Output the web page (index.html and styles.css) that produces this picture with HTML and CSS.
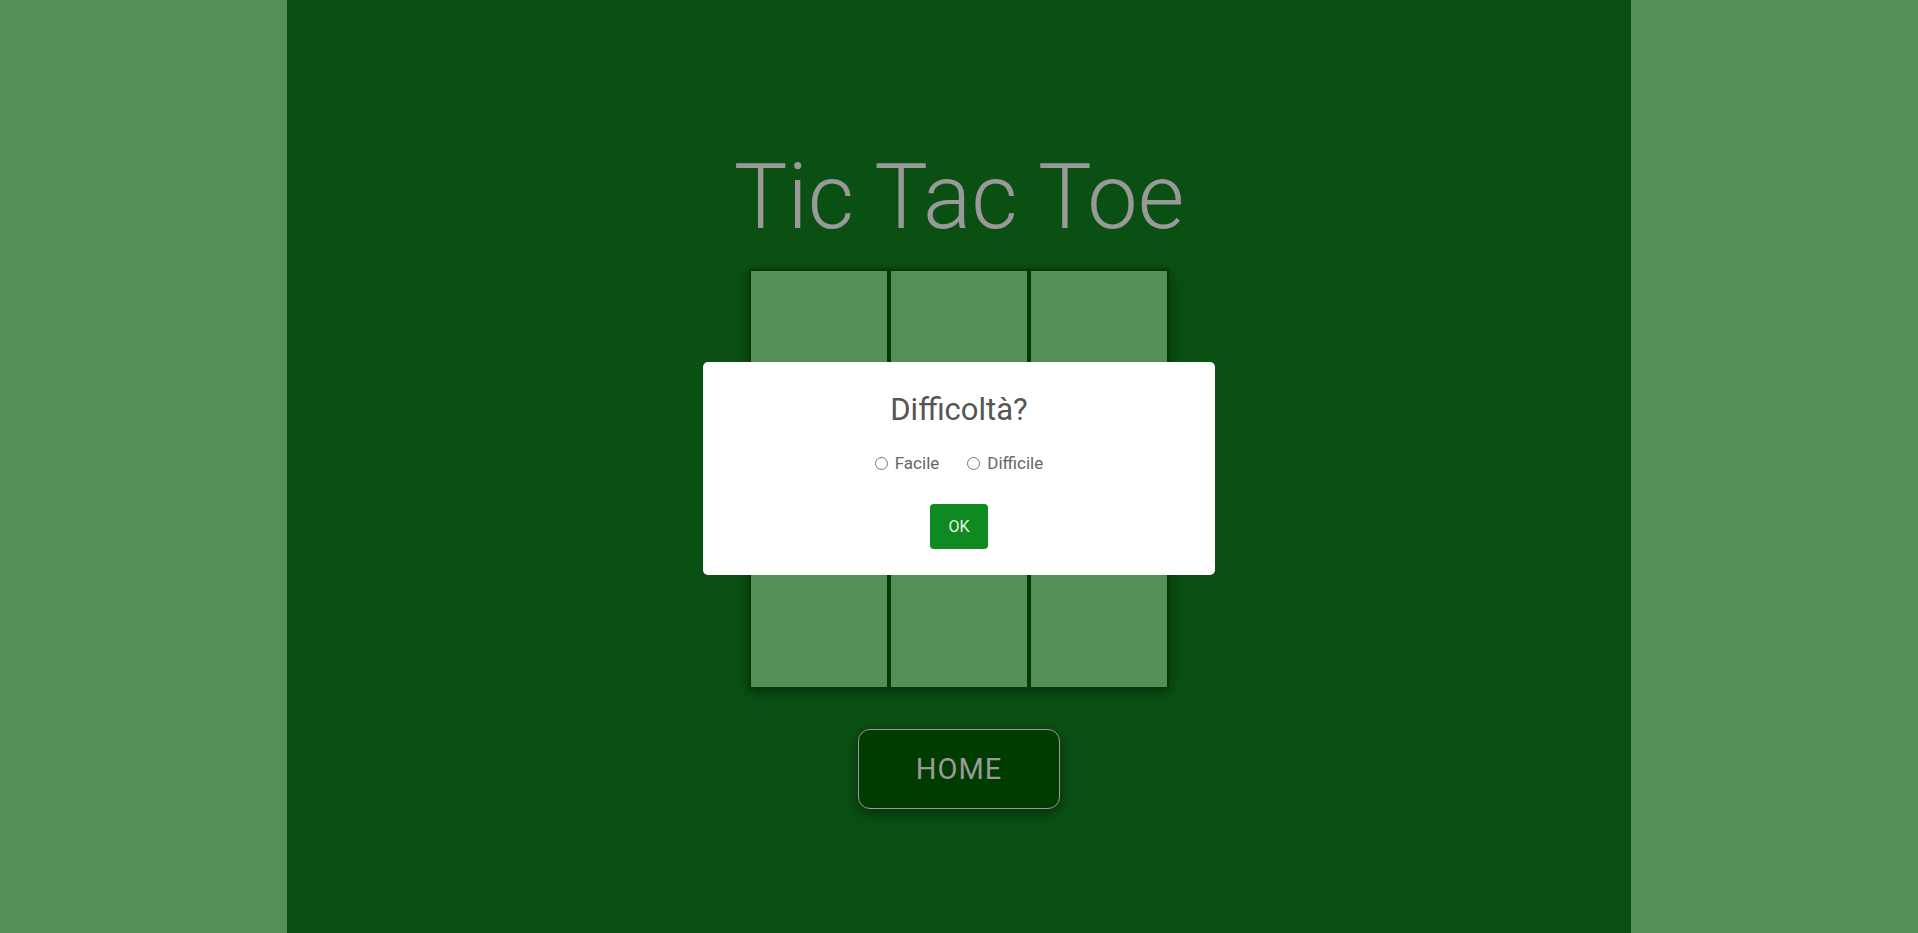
FILE: index.html
```html
<!DOCTYPE html>
<html lang="it">
<head>
<meta charset="utf-8">
<title>Tic Tac Toe</title>
<link rel="stylesheet" href="styles.css">
</head>
<body>
<main class="page">
  <h1 class="title">Tic Tac Toe</h1>
  <div class="board">
    <div class="cell"></div><div class="cell"></div><div class="cell"></div>
    <div class="cell"></div><div class="cell"></div><div class="cell"></div>
    <div class="cell"></div><div class="cell"></div><div class="cell"></div>
  </div>
  <button class="home">HOME</button>
</main>
<div class="modal">
  <h2 class="modal-title">Difficoltà?</h2>
  <div class="options">
    <label class="opt"><span class="radio"></span>Facile</label>
    <label class="opt"><span class="radio"></span>Difficile</label>
  </div>
  <button class="ok">OK</button>
</div>
</body>
</html>
```
FILE: styles.css
```css
html, body {
  margin: 0;
  padding: 0;
  height: 100%;
}
body {
  background: #568f56;
  font-family: Roboto, "Noto Sans", sans-serif;
  overflow: hidden;
}
.page {
  width: 1344px;
  margin: 0 auto;
  height: 100%;
  background: #0a5013;
  display: flex;
  flex-direction: column;
  align-items: center;
  padding-top: 145px;
  box-sizing: border-box;
}
.title {
  margin: 0;
  font-weight: 300;
  font-size: 90px;
  line-height: 106px;
  color: #999999;
  letter-spacing: 0;
}
.board {
  margin-top: 18px;
  display: grid;
  grid-template-columns: repeat(3, 140px);
  grid-template-rows: repeat(3, 140px);
  box-shadow: 0 3px 12px rgba(0, 0, 0, 0.45);
}
.cell {
  background: #568f56;
  border: 2px solid #023a02;
}
.home {
  margin-top: 40px;
  width: 202px;
  height: 80px;
  background: #003c00;
  border: 1px solid #9a9a9a;
  border-radius: 12px;
  color: #9a9a9a;
  font-family: Roboto, "Noto Sans", sans-serif;
  font-size: 29px;
  letter-spacing: 1px;
  box-shadow: 0 4px 14px rgba(0, 0, 0, 0.45);
}
.modal {
  position: absolute;
  top: 362px;
  left: 50%;
  transform: translateX(-50%);
  width: 512px;
  height: 213px;
  box-sizing: border-box;
  background: #ffffff;
  border-radius: 5px;
  display: flex;
  flex-direction: column;
  align-items: center;
  padding-top: 26px;
}
.modal-title {
  margin: 0;
  font-weight: 400;
  font-size: 31px;
  line-height: 44px;
  color: #555555;
}
.options {
  margin-top: 21px;
  display: flex;
  gap: 28px;
  color: #666666;
  font-size: 17px;
}
.opt {
  display: flex;
  align-items: center;
  gap: 7px;
}
.radio {
  width: 11px;
  height: 11px;
  border: 1px solid #777;
  border-radius: 50%;
}
.ok {
  margin-top: 31px;
  width: 58px;
  height: 45px;
  background: #0f8a20;
  color: #e8f5e8;
  border: none;
  border-radius: 4px;
  font-family: Roboto, "Noto Sans", sans-serif;
  font-size: 16px;
}
```
